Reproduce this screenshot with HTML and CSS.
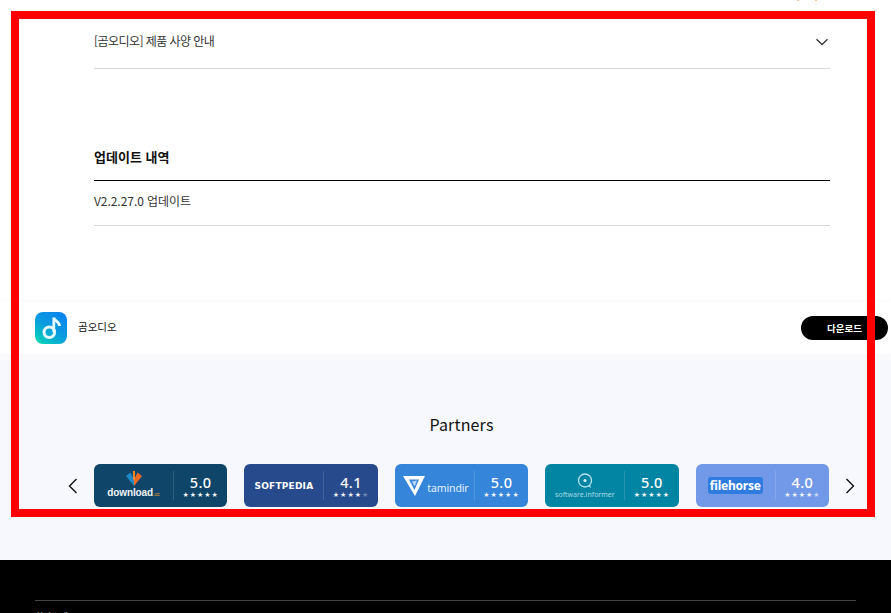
FILE: index.html
```html
<!DOCTYPE html>
<html lang="ko">
<head>
<meta charset="utf-8">
<title>곰오디오</title>
<link rel="stylesheet" href="styles.css">
</head>
<body>
<div class="page">
  <main class="content">
    <div class="top-strip"><i class="crumb"></i><i class="crumb"></i></div>
    <div class="accordion-row">
      <span class="accordion-label">[곰오디오] 제품 사양 안내</span>
      <svg class="chev" width="14" height="8" viewBox="0 0 14 8"><path d="M1.500 1.200 7 6.500l5.500-5.300" fill="none" stroke="#333" stroke-width="1.300"/></svg>
    </div>
    <h2 class="update-title">업데이트 내역</h2>
    <div class="update-row"><span class="update-label">V2.2.27.0 업데이트</span></div>
  </main>

  <div class="app-bar">
    <div class="app-info">
      <div class="app-icon">
        <svg width="32" height="32" viewBox="0 0 32 32"><g fill="none" stroke="#e6fbff"><circle cx="14.300" cy="20.300" r="5.300" stroke-width="3"/><path d="M18.800 20.300V5.500c0 3.500 5.700 3.500 5.700 8.500" stroke-width="2.800"/></g></svg>
      </div>
      <span class="app-name">곰오디오</span>
    </div>
    <a class="download-btn">다운로드</a>
  </div>

  <section class="partners">
    <h2 class="partners-title">Partners</h2>
    <div class="carousel">
      <svg class="arrow" width="10" height="16" viewBox="0 0 10 16"><path d="M8.500 1 1.500 8l7 7" fill="none" stroke="#111" stroke-width="1.400"/></svg>
      <div class="cards">
        <div class="card card-download">
          <div class="logo logo-stack">
            <svg width="16" height="15" viewBox="0 0 16 15"><path d="M0 5 4.500 1.500 8 9v6z" fill="#1e88c7"/><path d="M16 5l-4.500-3.500L8 9v6z" fill="#f26a21"/><path d="M7 0h2v8L8 10 7 8z" fill="#ef8a2a"/></svg>
            <span class="dl-text">download<small>.cc</small></span>
          </div>
          <div class="score"><b>5.0</b><span class="stars">★★★★★</span></div>
        </div>
        <div class="card card-softpedia">
          <div class="logo"><span class="sp-text">SOFTPEDIA</span></div>
          <div class="score"><b>4.1</b><span class="stars">★★★★<em>★</em></span></div>
        </div>
        <div class="card card-tamindir">
          <div class="logo logo-row">
            <svg width="22" height="20" viewBox="0 0 22 20"><path d="M0 0h22L12 20z" fill="#fff"/><path d="M6 3.500h10L11.500 14z" fill="#3585da"/><path d="M9 5.500l5-1-2.500 6z" fill="#bcd8f5"/></svg>
            <span class="tm-text">tamindir</span>
          </div>
          <div class="score"><b>5.0</b><span class="stars">★★★★★</span></div>
        </div>
        <div class="card card-informer">
          <div class="logo logo-stack">
            <svg width="16" height="16" viewBox="0 0 16 16"><circle cx="8" cy="7.500" r="6.500" fill="none" stroke="#b5e3ee" stroke-width="1.300"/><circle cx="8" cy="7.500" r="1.600" fill="#d6f2f8"/><path d="M11 13l3 2-1-3.500z" fill="#b5e3ee"/></svg>
            <span class="si-text">software.informer</span>
          </div>
          <div class="score"><b>5.0</b><span class="stars">★★★★★</span></div>
        </div>
        <div class="card card-filehorse">
          <div class="logo"><span class="fh-text">filehorse</span></div>
          <div class="score"><b>4.0</b><span class="stars">★★★★<em class="half">★</em></span></div>
        </div>
      </div>
      <svg class="arrow" width="10" height="16" viewBox="0 0 10 16"><path d="M1.500 1l7 7-7 7" fill="none" stroke="#111" stroke-width="1.400"/></svg>
    </div>
  </section>

  <footer class="footer">
    <div class="footer-inner">회사소개</div>
  </footer>
</div>
<div class="frame"></div>
</body>
</html>
```
FILE: styles.css
```css
* { box-sizing: border-box; }
html, body { margin: 0; padding: 0; height: 613px; overflow: hidden; background: #fff; }
body { font-family: "Noto Sans CJK KR", "Noto Sans", sans-serif; color: #111; }
.page { width: 891px; height: 613px; overflow: hidden; }

.content { width: 736px; height: 302px; margin-left: 94px; }
.top-strip { height: 1px; margin-left: 703px; display: flex; gap: 16px; }
.crumb { width: 2px; height: 1px; background: #f0c48c; }
.accordion-row { height: 68px; padding-top: 13px; display: flex; align-items: center; justify-content: space-between; border-bottom: 1px solid #d9d9d9; font-size: 12px; color: #333; }
.accordion-label { letter-spacing: -.55px; margin-top: -2px; }
.chev { margin: 1px 1px 0 0; }
.update-title { margin: 78px 0 0; height: 34px; font-size: 13px; line-height: 19px; font-weight: 700; color: #111; border-bottom: 1px solid #000; }
.update-row { height: 45px; display: flex; align-items: center; border-bottom: 1px solid #d9d9d9; font-size: 12px; color: #333; }
.update-label { margin-top: -5px; letter-spacing: -.05px; }

.app-bar { height: 52px; background: #fff; padding: 0 3px 0 35px; display: flex; align-items: center; justify-content: space-between; box-shadow: 0 0 10px rgba(0,0,0,.03); position: relative; }
.app-info { display: flex; align-items: center; gap: 11px; }
.app-icon { width: 32px; height: 32px; border-radius: 8px; background: linear-gradient(215deg, #0a7ff0 0%, #0a9be0 50%, #05dcb0 100%); }
.app-icon svg { display: block; }
.app-name { font-size: 10.500px; line-height: 14px; margin-top: -2px; color: #111; }
.download-btn { width: 87px; height: 24px; border-radius: 12px; background: #000; color: #fff; font-size: 9.500px; font-weight: 700; display: flex; align-items: center; justify-content: center; }

.partners { height: 206px; padding-top: 52px; border-top: 6px solid #fbfbfd; background: #f6f8fd; }
.partners-title { margin: 0; font-size: 16px; line-height: 24px; font-weight: 400; letter-spacing: .15px; text-align: center; color: #111; padding-left: 32px; }
.carousel { margin-top: 28px; padding-left: 68px; display: flex; align-items: center; }
.cards { margin: 0 16px; width: 735px; flex: none; display: grid; grid-template-columns: repeat(5, 133.200px); justify-content: space-between; }
.arrow { flex: none; }
.card { height: 43px; border-radius: 6px; display: flex; align-items: center; color: #fff; padding: 7px 0; }
.card-download { background: #0f4568; }
.card-softpedia { background: #264a8b; }
.card-tamindir { background: #3585da; }
.card-informer { background: #0284a3; }
.card-filehorse { background: #7199e8; }
.logo { width: 80px; height: 29px; border-right: 1px solid rgba(255,255,255,.14); display: flex; align-items: center; justify-content: center; }
.logo-stack { flex-direction: column; gap: 1px; }
.logo-row { gap: 2px; padding-left: 3px; }
.score { flex: 1; display: flex; flex-direction: column; align-items: center; padding-top: 1px; }
.score b { font-family: "Noto Sans", sans-serif; font-size: 14.500px; line-height: 17px; font-weight: 500; letter-spacing: .4px; }
.stars { font-family: "DejaVu Sans", sans-serif; font-size: 7px; line-height: 8px; letter-spacing: 1px; color: #f2f5fa; }
.stars em { font-style: normal; opacity: .35; }
.stars .half { opacity: .65; }
.dl-text { font-family: "Liberation Sans", sans-serif; font-size: 10px; line-height: 11px; font-weight: 700; letter-spacing: -.1px; color: #f0f3f6; }
.dl-text small { font-size: 5px; color: #c98a2b; }
.sp-text { font-family: "DejaVu Sans", sans-serif; font-size: 9px; font-weight: 700; letter-spacing: .2px; }
.tm-text { font-family: "Noto Sans", sans-serif; font-size: 10.500px; letter-spacing: -.1px; color: #e3f0fc; margin-top: 4px; }
.si-text { font-family: "Noto Sans", sans-serif; font-size: 7px; line-height: 9px; color: #a9dbe6; white-space: nowrap; }
.fh-text { font-family: "Noto Sans", sans-serif; font-size: 12px; line-height: 17px; font-weight: 700; padding: 0 2px; background: #2f7be0; border-radius: 3px; letter-spacing: -.2px; }

.footer { height: 53px; background: #000; padding: 40px 35px 0; }
.footer-inner { border-top: 1px solid #444; padding-top: 9px; color: #ddd; font-size: 9px; line-height: 14px; }

.frame { position: absolute; left: 11px; top: 11px; width: 864px; height: 506px; border: 8px solid #f00; pointer-events: none; }
```
